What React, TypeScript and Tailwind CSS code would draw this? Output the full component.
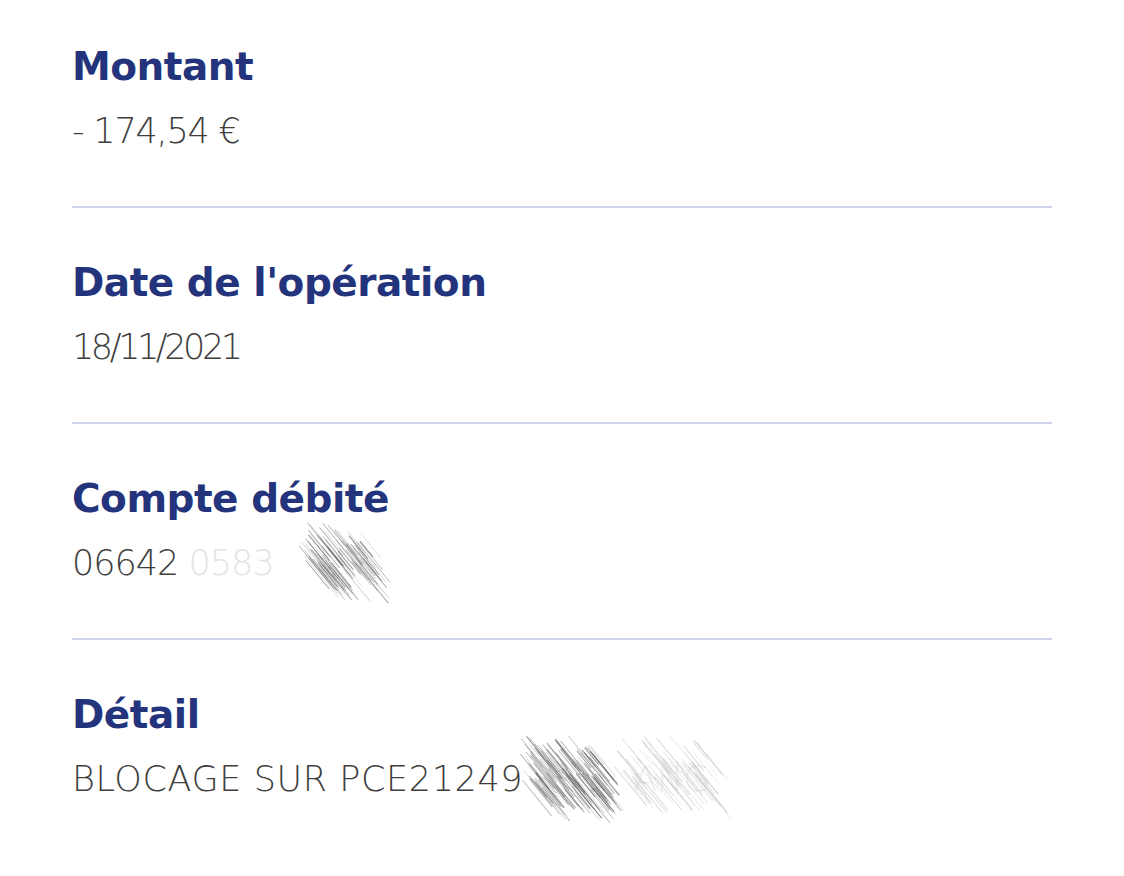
import React from "react";

const sans = { fontFamily: '"DejaVu Sans", "Liberation Sans", sans-serif' };

// deterministic pseudo-random for the redaction scribbles
function rng(seed: number) {
  let s = seed;
  return () => {
    s = (s * 9301 + 49297) % 233280;
    return s / 233280;
  };
}

function Scribble({
  width,
  height,
  seed,
  shade,
  count,
}: {
  width: number;
  height: number;
  seed: number;
  shade: string;
  count: number;
}) {
  const r = rng(seed);
  const lines = [];
  for (let i = 0; i < count; i++) {
    const cx = width * (0.2 + 0.6 * r());
    const cy = height * (0.25 + 0.5 * r());
    const len = 14 + r() * 26;
    lines.push(
      <line
        key={i}
        x1={cx - len * 0.45}
        y1={cy - len * 0.55}
        x2={cx + len * 0.45}
        y2={cy + len * 0.55}
        stroke={shade}
        strokeWidth={0.5 + r() * 0.7}
        opacity={0.3 + r() * 0.5}
      />
    );
  }
  return (
    <svg width={width} height={height} viewBox={`0 0 ${width} ${height}`}>
      {lines}
    </svg>
  );
}

function Field({ label, children }: { label: string; children: React.ReactNode }) {
  return (
    <div>
      <div
        className="text-[39px] leading-[48px] font-bold text-[#24347c] tracking-[-0.5px]"
        style={sans}
      >
        {label}
      </div>
      <div
        className="mt-[18px] text-[35px] leading-[44px] font-extralight text-[#3f3f3f] relative"
        style={sans}
      >
        {children}
      </div>
    </div>
  );
}

export default function App() {
  return (
    <div className="w-[1124px] h-[876px] bg-white overflow-hidden">
      <div className="pl-[72px] w-[1052px] pt-[43px]">
        <div className="pb-[53px]">
          <Field label="Montant">
            <span className="tracking-[-1.2px]">- 174,54 €</span>
          </Field>
        </div>
        <div className="h-[2px] bg-[#cfd4ec]" />
        <div className="pt-[51px] pb-[53px]">
          <Field label="Date de l'opération">
            <span className="tracking-[-3.4px]">18/11/2021</span>
          </Field>
        </div>
        <div className="h-[2px] bg-[#cfd4ec]" />
        <div className="pt-[51px] pb-[53px]">
          <Field label="Compte débité">
            <span className="tracking-[-1px]">06642 </span>
            <span className="text-[#e4e4e4] tracking-[-1px]">0583</span>
            <span className="absolute left-[222px] top-[-22px]">
              <Scribble width={100} height={90} seed={7} shade="#6e6e6e" count={90} />
            </span>
          </Field>
        </div>
        <div className="h-[2px] bg-[#cfd4ec]" />
        <div className="pt-[51px]">
          <Field label="Détail">
            <span className="tracking-[0.6px]">BLOCAGE SUR PCE21249</span>
            <span className="text-[#efefef] ml-[110px]">ANG</span>
            <span className="absolute left-[440px] top-[-26px]">
              <Scribble width={120} height={96} seed={3} shade="#666666" count={130} />
            </span>
            <span className="absolute left-[530px] top-[-32px]">
              <Scribble width={140} height={96} seed={11} shade="#b8b8b8" count={60} />
            </span>
          </Field>
        </div>
      </div>
    </div>
  );
}
